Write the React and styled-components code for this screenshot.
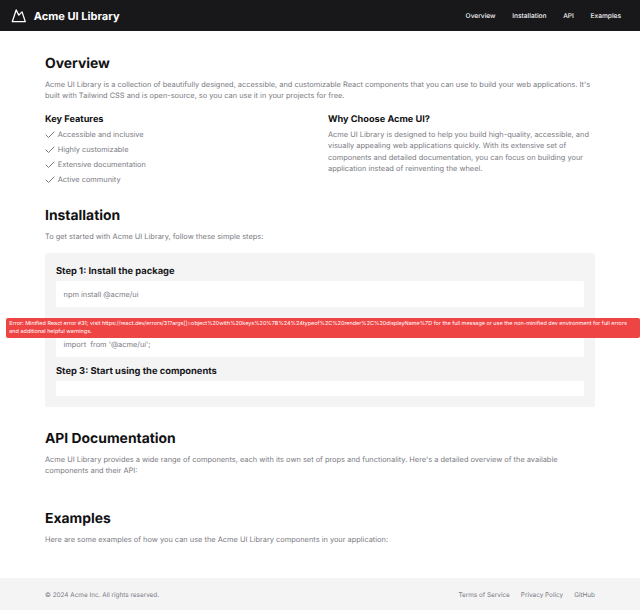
import React from "react";
import styled, { createGlobalStyle } from "styled-components";

const Global = createGlobalStyle`
  html, body { margin: 0; padding: 0; background: #fff; }
  body {
    font-family: Inter, "Liberation Sans", sans-serif;
    color: #111;
    text-rendering: geometricPrecision;
  }
  * { box-sizing: border-box; }
`;
const Page = styled.div`
  position: relative;
  width: 640px;
  height: 610px;
  overflow: hidden;
  display: flex;
  flex-direction: column;
`;
const Header = styled.header`
  height: 31px;
  flex: none;
  background: #18181b;
  display: flex;
  align-items: center;
  justify-content: space-between;
  padding: 0 19px 0 10.7px;
`;
const Brand = styled.div`
  display: flex;
  align-items: center;
  gap: 7.4px;
  color: #fff;
  font-size: 11.05px;
  font-weight: 700;
`;
const Nav = styled.nav`
  display: flex;
  gap: 16.7px;
`;
const NavLink = styled.a`
  color: #f4f4f5;
  font-size: 6.6px;
  font-weight: 500;
`;
const Main = styled.main`
  flex: 1;
  padding: 24px 45px 0;
  display: flex;
  flex-direction: column;
`;
const Section = styled.section`
  margin-bottom: ${(p) => p.$gap}px;
`;
const H2 = styled.h2`
  margin: 0 0 ${(p) => p.$mb ?? 6}px;
  font-size: 13.9px;
  line-height: 18px;
  font-weight: 700;
  color: #111113;
`;
const Text = styled.p`
  margin: 0;
  font-size: 7.42px;
  line-height: 11.2px;
  color: #7a7a82;
`;
const Columns = styled.div`
  display: grid;
  grid-template-columns: 1fr 1fr;
  gap: 16px;
  margin-top: 12px;
`;
const H3 = styled.h3`
  margin: 0 0 3.2px;
  font-size: 9.2px;
  line-height: 13px;
  font-weight: 700;
  color: #111113;
`;
const List = styled.ul`
  list-style: none;
  margin: 0;
  padding: 0;
  display: flex;
  flex-direction: column;
  gap: 4px;
`;
const Item = styled.li`
  display: flex;
  align-items: center;
  gap: 2.7px;
  font-size: 7.42px;
  line-height: 11px;
  color: #7a7a82;
`;
const Panel = styled.div`
  margin-top: 11px;
  background: #f4f4f5;
  border-radius: 3px;
  padding: 12px 11px 11px;
`;
const StepTitle = styled.h3`
  margin: 0 0 3px;
  font-size: 9.35px;
  line-height: 13px;
  font-weight: 700;
  color: #18181b;
`;
const Code = styled.div`
  height: ${(p) => p.$h}px;
  margin-bottom: ${(p) => p.$mb}px;
  background: #fff;
  border-radius: 2px;
  padding: 0 7.5px;
  display: flex;
  align-items: center;
  font-size: 7.42px;
  color: #7a7a82;
  white-space: pre;
`;
const Footer = styled.footer`
  height: 32px;
  flex: none;
  background: #f4f4f5;
  display: flex;
  align-items: center;
  justify-content: space-between;
  padding: 1px 45px 0;
  font-size: 6.4px;
  color: #7a7a82;
`;
const FooterLinks = styled.div`
  display: flex;
  gap: 11px;
`;
const ErrorBanner = styled.div`
  position: absolute;
  left: 6px;
  right: 0;
  top: 318px;
  height: 20px;
  background: #ef4444;
  border-radius: 2px;
  padding: 2px 3.3px;
  font-size: 5.47px;
  line-height: 8.4px;
  color: #fff;
  overflow: hidden;
`;

const Logo = () => (
  <svg width="15.6" height="15.6" viewBox="0 0 24 24" fill="none" stroke="#fff" strokeWidth="2" strokeLinecap="round" strokeLinejoin="round">
    <path d="m8 3 4 8 5-5 5 15H2L8 3z" />
  </svg>
);
const Check = () => (
  <svg width="10" height="10" viewBox="2 2 20 20" fill="none" stroke="#7a7a82" strokeWidth="2" strokeLinecap="round" strokeLinejoin="round">
    <path d="M20 6 9 17l-5-5" />
  </svg>
);

export default function App() {
  return (
    <Page>
      <Global />
      <Header>
        <Brand><Logo />Acme UI Library</Brand>
        <Nav>
          <NavLink>Overview</NavLink>
          <NavLink>Installation</NavLink>
          <NavLink>API</NavLink>
          <NavLink>Examples</NavLink>
        </Nav>
      </Header>
      <Main>
        <Section $gap={22}>
          <H2 $mb={5.5}>Overview</H2>
          <Text>Acme UI Library is a collection of beautifully designed, accessible, and customizable React components that you can use to build your web applications. It's built with Tailwind CSS and is open-source, so you can use it in your projects for free.</Text>
          <Columns>
            <div>
              <H3>Key Features</H3>
              <List>
                {["Accessible and inclusive", "Highly customizable", "Extensive documentation", "Active community"].map((t) => (
                  <Item key={t}><Check />{t}</Item>
                ))}
              </List>
            </div>
            <div>
              <H3>Why Choose Acme UI?</H3>
              <Text>Acme UI Library is designed to help you build high-quality, accessible, and visually appealing web applications quickly. With its extensive set of components and detailed documentation, you can focus on building your application instead of reinventing the wheel.</Text>
            </div>
          </Columns>
        </Section>
        <Section $gap={22.5}>
          <H2>Installation</H2>
          <Text>To get started with Acme UI Library, follow these simple steps:</Text>
          <Panel>
            <StepTitle>Step 1: Install the package</StepTitle>
            <Code $h={25.5} $mb={24.5}>npm install @acme/ui</Code>
            <Code $h={26} $mb={8}>import  from '@acme/ui';</Code>
            <StepTitle>Step 3: Start using the components</StepTitle>
            <Code $h={15} $mb={0} />
          </Panel>
        </Section>
        <Section $gap={33.6}>
          <H2>API Documentation</H2>
          <Text>Acme UI Library provides a wide range of components, each with its own set of props and functionality. Here's a detailed overview of the available components and their API:</Text>
        </Section>
        <Section $gap={0}>
          <H2>Examples</H2>
          <Text>Here are some examples of how you can use the Acme UI Library components in your application:</Text>
        </Section>
      </Main>
      <Footer>
        <span>© 2024 Acme Inc. All rights reserved.</span>
        <FooterLinks>
          <span>Terms of Service</span>
          <span>Privacy Policy</span>
          <span>GitHub</span>
        </FooterLinks>
      </Footer>
      <ErrorBanner>Error: Minified React error #31; visit https://react.dev/errors/31?args[]=object%20with%20keys%20%7B%24%24typeof%2C%20render%2C%20displayName%7D for the full message or use the non-minified dev environment for full errors and additional helpful warnings.</ErrorBanner>
    </Page>
  );
}
